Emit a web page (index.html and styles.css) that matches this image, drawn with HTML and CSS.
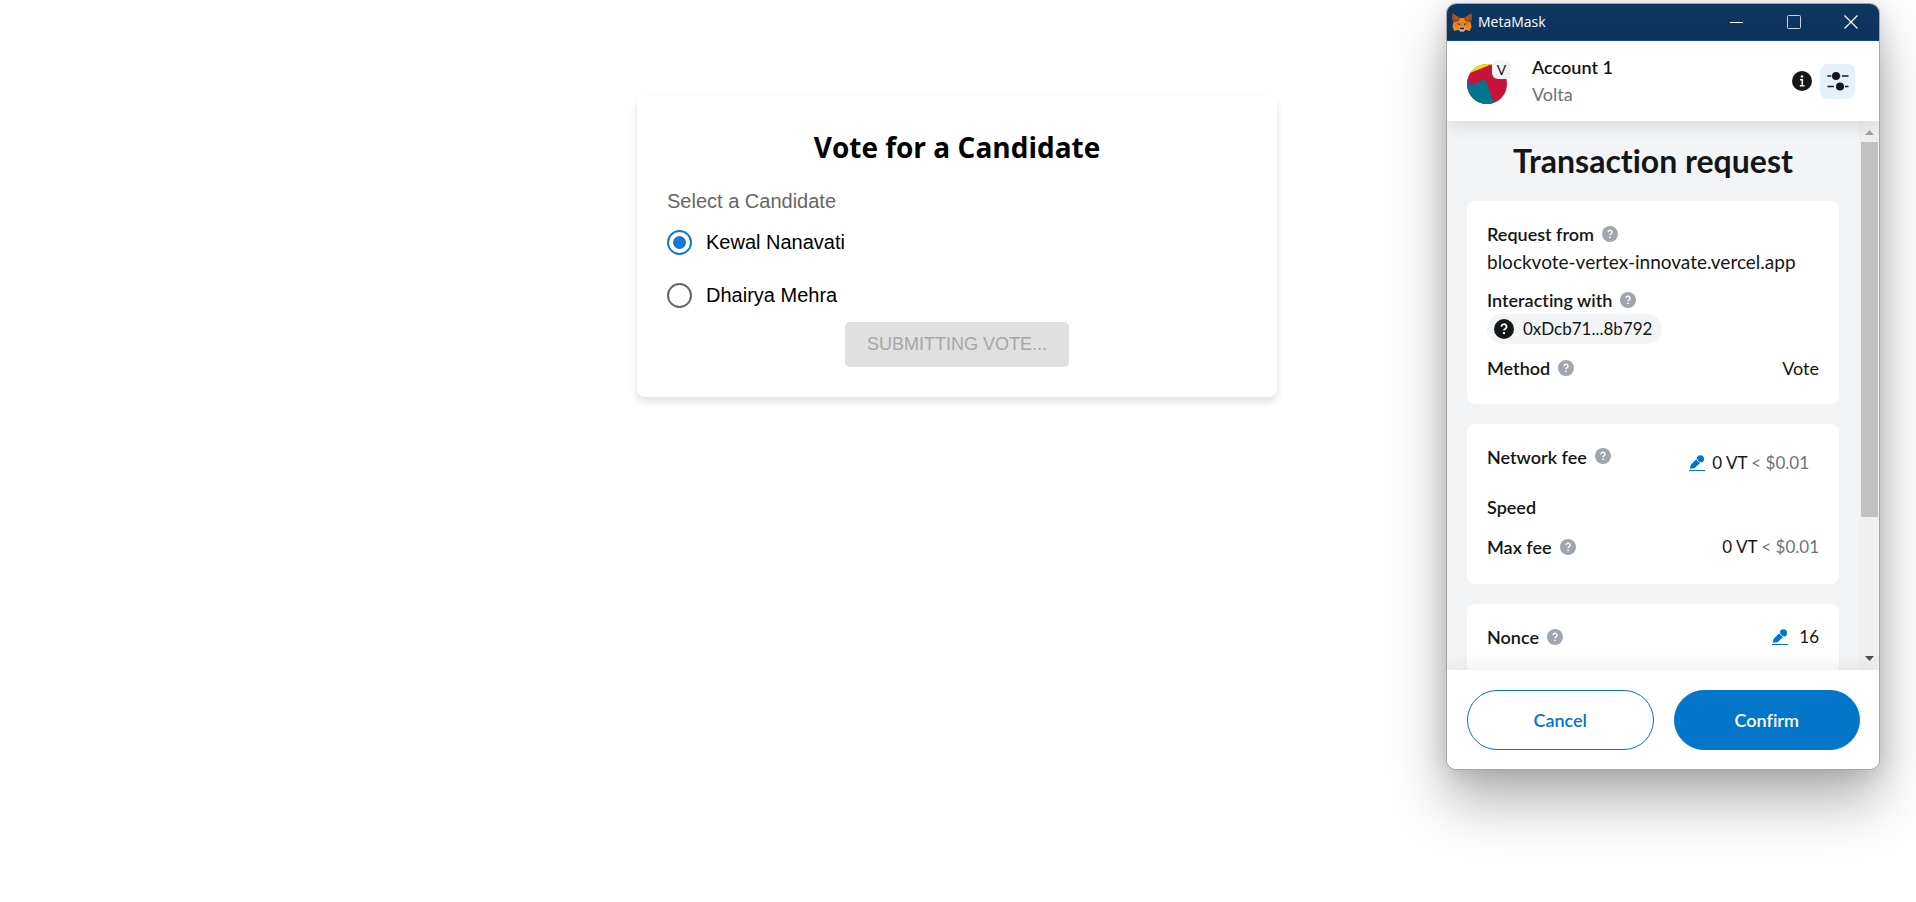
FILE: index.html
```html
<!DOCTYPE html>
<html lang="en">
<head>
<meta charset="utf-8">
<meta name="viewport" content="width=device-width, initial-scale=1">
<title>Vote for a Candidate</title>
<link rel="stylesheet" href="styles.css">
</head>
<body>
<svg class="sprite" aria-hidden="true">
  <symbol id="help" viewBox="0 0 16 16"><circle cx="8" cy="8" r="8" fill="currentColor"/><path d="M6 6.200a2 2 0 1 1 3 1.700c-.7.400-1 .700-1 1.300" fill="none" stroke="#fff" stroke-width="1.400"/><circle cx="8" cy="11.300" r=".9" fill="#fff"/></symbol>
  <symbol id="edit" viewBox="0 0 16 16"><path d="M0 15h16v1H0z" fill="currentColor"/><path d="M7.300 4.200L2 9.400Q1.600 9.800 1.500 10.400L.9 13.800l3.900-.5q.7-.1 1.200-.6l5.400-5z" fill="currentColor"/><circle cx="11.400" cy="3.900" r="3.600" fill="currentColor"/><path d="M7.600 3.400c.5 2.300 2 3.800 4.500 4.500" fill="none" stroke="#fff" stroke-width=".8"/></symbol>
</svg>

<main class="page">
  <form class="vote-card">
    <h1 class="vote-title">Vote for a Candidate</h1>
    <fieldset class="vote-options">
      <legend class="vote-legend">Select a Candidate</legend>
      <label class="option"><input class="radio" type="radio" name="candidate" checked>Kewal Nanavati</label>
      <label class="option"><input class="radio" type="radio" name="candidate">Dhairya Mehra</label>
    </fieldset>
    <button class="submit" type="submit" disabled>SUBMITTING VOTE...</button>
  </form>
</main>

<section class="wallet" aria-label="MetaMask">
  <header class="titlebar">
    <svg class="fox" viewBox="0 0 20 19" aria-hidden="true">
      <path d="M.8.500L8 5h4L19.200.5l.5 4.500-1 4.500.8 4-1.800 4.200-4.200-1L12 18.500H8l-1.500-1.800-4.200 1L.5 13.500l.8-4-1-4.500z" fill="#e8821e"/>
      <path d="M.8.500L8 5 6.500 8 1.300 9.500.3 5zM19.200.5L12 5l1.500 3 5.200 1.500 1-4.500z" fill="#8a4a22"/>
      <path d="M1.300 1.500l5.200 4L3.500 7.500zM18.700 1.500l-5.200 4 3 2z" fill="#b05c25"/>
      <path d="M.5 13.500l6-.2v3.400l-4.200 1zM19.500 13.500l-6-.2v3.400l4.200 1z" fill="#f08c20"/>
      <path d="M4.500 10.500l3.300.2.300 1.500zM15.500 10.500l-3.300.2-.3 1.500z" fill="#233447"/>
      <path d="M7 14.500l1.500-1h3l1.500 1-.5 3-1 1h-3l-1-1z" fill="#c9bdb2"/>
      <path d="M8.300 14.500h3.400l.5 1.700H7.800z" fill="#1c1b1c"/>
    </svg>
    <span class="app-name">MetaMask</span>
    <button class="win-button" aria-label="Minimize"><svg width="14" height="14" viewBox="0 0 14 14"><path d="M0 7.500h13" stroke="#fff"/></svg></button>
    <button class="win-button" aria-label="Maximize"><svg width="14" height="14" viewBox="0 0 14 14"><rect x=".5" y=".5" width="13" height="13" rx="1" fill="none" stroke="#c8d2de"/></svg></button>
    <button class="win-button" aria-label="Close"><svg width="14" height="14" viewBox="0 0 14 14"><path d="M.5.500l13 13M13.500.5l-13 13" stroke="#fff" stroke-width="1.200"/></svg></button>
  </header>

  <div class="account">
    <div class="avatar">
      <svg viewBox="0 0 40 40" width="40" height="40" aria-hidden="true">
        <clipPath id="disc"><circle cx="20" cy="20" r="20"/></clipPath>
        <g clip-path="url(#disc)"><path d="M0 0h40v40H0z" fill="#c8143b"/><path d="M0 10L28-1H0z" fill="#f3e400"/><path d="M0 13l3.500 8L0 24z" fill="#2a4bd8"/><path d="M0 22.500L18.500 15.500 28 42H0z" fill="#03758c"/></g>
      </svg>
      <span class="badge">V</span>
    </div>
    <div class="account-text">
      <div class="account-name">Account 1</div>
      <div class="network">Volta</div>
    </div>
    <svg class="info" width="20" height="20" viewBox="0 0 20 20" aria-label="Info"><circle cx="10" cy="10" r="10" fill="#141618"/><circle cx="10" cy="5.500" r="1.300" fill="#fff"/><path d="M8 8.700h2.300v6M7.800 14.700h4.700" fill="none" stroke="#fff" stroke-width="1.500"/></svg>
    <button class="settings" aria-label="Settings"><svg width="22" height="20" viewBox="0 0 22 20"><path d="M.5 5H14M15 5h6.500M.5 15.500H7M8 15.500h13.500" stroke="#141618" stroke-width="1.500"/><circle cx="9" cy="5" r="4.800" fill="#e4f1f9"/><circle cx="13" cy="15.500" r="5" fill="#e4f1f9"/><circle cx="9" cy="5" r="4" fill="#141618"/><circle cx="13" cy="15.500" r="4" fill="#141618"/></svg></button>
  </div>

  <div class="viewport">
    <div class="content">
      <h2 class="request-title">Transaction request</h2>
      <div class="panel">
        <div class="row strong">Request from <svg class="help"><use href="#help"/></svg></div>
        <div class="row origin">blockvote-vertex-innovate.vercel.app</div>
        <div class="row strong spaced">Interacting with <svg class="help"><use href="#help"/></svg></div>
        <button class="pill"><svg class="pill-icon"><use href="#help"/></svg>0xDcb71...8b792</button>
        <div class="row spaced"><span class="strong">Method</span><svg class="help"><use href="#help"/></svg><span class="value">Vote</span></div>
      </div>
      <div class="panel fees">
        <div class="row tall"><span class="strong">Network fee</span><svg class="help"><use href="#help"/></svg>
          <span class="value amount inset"><button class="edit" aria-label="Edit network fee"><svg><use href="#edit"/></svg></button><span>0 VT <span class="fiat">&lt; $0.01</span></span></span></div>
        <div class="row strong">Speed</div>
        <div class="row"><span class="strong">Max fee</span><svg class="help"><use href="#help"/></svg><span class="value amount"><span>0 VT <span class="fiat">&lt; $0.01</span></span></span></div>
      </div>
      <div class="panel">
        <div class="row"><span class="strong">Nonce</span><svg class="help"><use href="#help"/></svg>
          <span class="value amount nonce"><button class="edit" aria-label="Edit nonce"><svg><use href="#edit"/></svg></button>16</span></div>
      </div>
    </div>
    <div class="scrollbar" aria-hidden="true">
      <svg width="20" height="21" viewBox="0 0 20 21"><path d="M6 14l4.500-5 4.500 5z" fill="#a3a3a3"/></svg>
      <div class="track"><div class="thumb"></div></div>
      <svg width="20" height="21" viewBox="0 0 20 21"><path d="M6 7l4.500 5L15 7z" fill="#505050"/></svg>
    </div>
  </div>

  <footer class="actions">
    <button class="action cancel">Cancel</button>
    <button class="action confirm">Confirm</button>
  </footer>
</section>
</body>
</html>
```
FILE: styles.css
```css
* { box-sizing: border-box; }

body {
  margin: 0;
  min-height: 100vh;
  background: #fff;
  overflow: hidden;
  font-family: "Liberation Sans", Arial, sans-serif;
}

button { font: inherit; border: 0; padding: 0; background: none; color: inherit; }
svg { display: block; flex: none; }
.sprite { position: absolute; width: 0; height: 0; }

/* Voting form */
.page { padding: 96px 22px 40px 20px; }

.vote-card {
  display: flex;
  flex-direction: column;
  max-width: 640px;
  margin: 0 auto;
  padding: 30px;
  border-radius: 8px;
  background: #fff;
  box-shadow: 0 5px 8px rgba(0, 0, 0, .12);
}

.vote-title {
  margin: 0 0 20px;
  font: 700 28px/42px "Open Sans", "Segoe UI", sans-serif;
  text-align: center;
  color: #000;
}

.vote-options { margin: 0; padding: 0; border: 0; font-size: 20px; }
.vote-legend { padding: 0; margin-bottom: 2px; line-height: 26px; color: #666; }
.option { display: flex; align-items: center; gap: 14px; height: 53px; color: #000; }

.radio {
  appearance: none;
  display: grid;
  place-items: center;
  width: 25px;
  height: 25px;
  margin: 0;
  border: 2px solid #666;
  border-radius: 50%;
}
.radio:checked { border-color: #1976d2; }
.radio:checked::before { content: ""; width: 13px; height: 13px; border-radius: 50%; background: #1976d2; }

.submit {
  align-self: center;
  padding: 0 22px;
  font-size: 18px;
  line-height: 45px;
  border-radius: 5px;
  background: #e0e0e0;
  color: #a6a6a6;
}

/* Wallet window */
.wallet {
  position: absolute;
  top: 3px;
  right: 36px;
  width: 434px;
  height: 767px;
  display: flex;
  flex-direction: column;
  border: 1px solid #a6a6a6;
  border-radius: 10px;
  background: #fff;
  background-clip: padding-box;
  box-shadow: 0 32px 56px rgba(0, 0, 0, .3), 0 2px 24px rgba(0, 0, 0, .14);
  overflow: hidden;
  font: 400 18px/28px Lato, "Open Sans", sans-serif;
  font-variant-ligatures: none;
  color: #141618;
}

.titlebar {
  display: flex;
  align-items: center;
  flex: none;
  height: 37px;
  padding-left: 5px;
  background: #0c355f;
  border-bottom: 1px solid #0a4f92;
  color: #fff;
}
.fox { width: 20px; height: 19px; }
.app-name { flex: 1; margin-left: 6px; font: 400 14px/20px "Open Sans", "Segoe UI", sans-serif; }
.win-button { display: grid; place-items: center; width: 57px; height: 36px; }

.account {
  position: relative;
  z-index: 1;
  display: flex;
  align-items: center;
  flex: none;
  height: 80px;
  padding: 0 24px 0 20px;
  background: #fff;
  box-shadow: 0 2px 20px rgba(0, 0, 0, .14);
}
.avatar { position: relative; margin-top: 5px; }
.badge {
  position: absolute;
  top: -4px;
  right: -4px;
  width: 19px;
  height: 19px;
  border-radius: 6px;
  background: #f2f4f6;
  font-size: 14px;
  line-height: 19px;
  text-align: center;
}
.account-text { flex: 1; margin-left: 25px; line-height: 27px; }
.account-name { font-weight: 600; }
.network { color: #6a737d; }
.settings { display: grid; place-items: center; width: 35px; height: 35px; margin-left: 8px; border-radius: 8px; background: #e4f1f9; }

.viewport { display: flex; flex: 1; min-height: 0; overflow: hidden; background: #f2f4f6; }
.content { flex: 1; padding: 20px; }
.request-title { margin: 0 0 20px; font-size: 32px; font-weight: 700; line-height: 40px; text-align: center; }

.panel { margin-bottom: 20px; padding: 19px 20px 22px; border-radius: 8px; background: #fff; }
.fees { display: grid; gap: 12px; padding-bottom: 23px; }
.row { display: flex; align-items: center; min-height: 28px; white-space: nowrap; }
.row.tall { align-items: flex-start; height: 38px; }
.spaced { margin-top: 10px; }
.strong { font-weight: 600; }
.origin { font-size: 19px; }
.help { width: 16px; height: 16px; margin-left: 8px; color: #9fa6ae; }
.tall .help { margin-top: 5px; }
.value { display: flex; align-items: center; gap: 7px; margin-left: auto; }
.amount { font-size: 17px; }
.inset { height: 40px; padding-right: 10px; }
.nonce { gap: 11px; }
.fiat { color: #6a737d; }
.edit { color: #0376c9; }
.edit svg { width: 16px; height: 16px; }

.pill {
  display: flex;
  align-items: center;
  gap: 9px;
  height: 30px;
  padding: 0 10px 0 7px;
  border-radius: 15px;
  background: #f2f4f6;
  font-size: 17px;
}
.pill-icon { width: 20px; height: 20px; color: #141618; }

.scrollbar { display: flex; flex-direction: column; width: 20px; background: #f0f0f0; }
.track { flex: 1; padding: 0 1px 0 2px; }
.thumb { height: 74%; background: #c1c1c1; }

.actions {
  position: relative;
  display: flex;
  gap: 20px;
  flex: none;
  padding: 20px 19px 19px 20px;
  background: #fff;
  box-shadow: 0 -2px 20px rgba(0, 0, 0, .08);
}
.action { flex: 1; height: 60px; border: 1px solid #0376c9; border-radius: 30px; font-weight: 600; }
.cancel { color: #0376c9; }
.confirm { background: #0376c9; color: #fff; }
```
